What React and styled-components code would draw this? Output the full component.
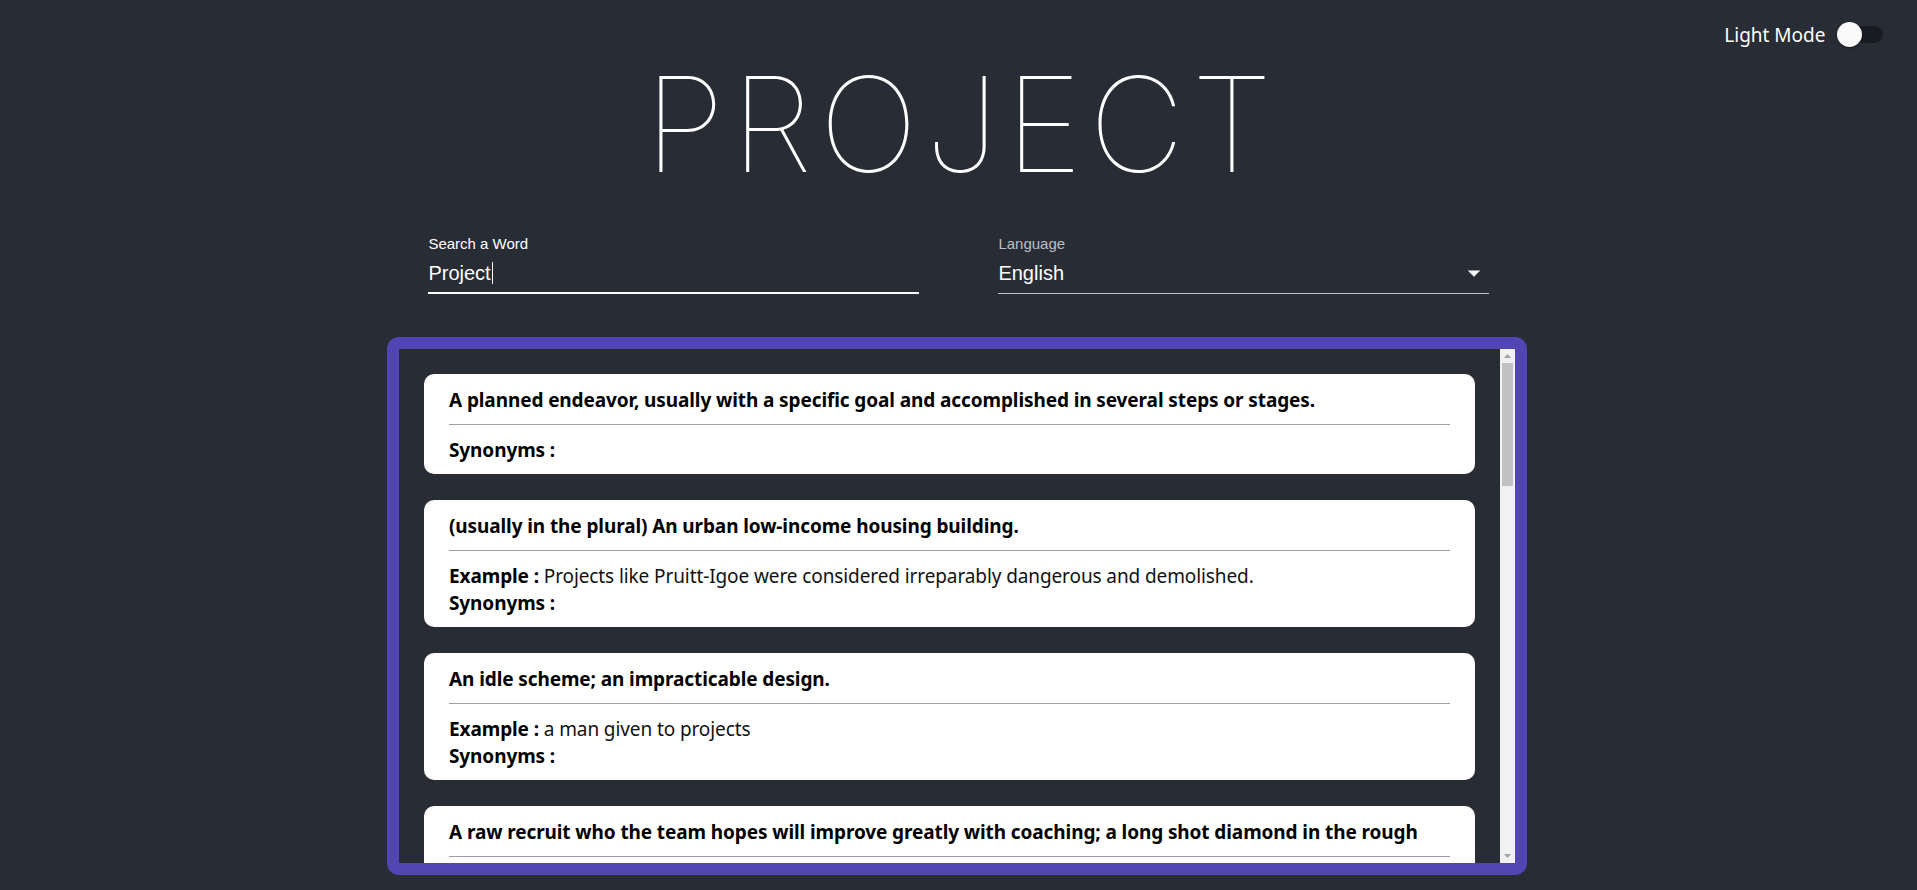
import React from "react";
import styled, { createGlobalStyle } from "styled-components";

const GlobalStyle = createGlobalStyle`
  html, body {
    margin: 0;
    padding: 0;
    background: #282c34;
  }
  body {
    font-family: "Noto Sans", "Open Sans", sans-serif;
    color: #ffffff;
    overflow: hidden;
  }
`;

const Page = styled.div`
  min-height: 890px;
  display: flex;
  flex-direction: column;
  align-items: center;
`;

const TopBar = styled.header`
  align-self: stretch;
  height: 58px;
  box-sizing: border-box;
  padding: 11px 19px 0 0;
  display: flex;
  justify-content: flex-end;
  align-items: center;
`;

const ModeLabel = styled.span`
  font-family: "Noto Sans", sans-serif;
  font-size: 19px;
  color: #ffffff;
`;

const SwitchRoot = styled.span`
  position: relative;
  display: inline-flex;
  width: 72.5px;
  height: 47.5px;
  padding: 15px;
  box-sizing: border-box;
`;

const SwitchTrack = styled.span`
  flex: 1;
  border-radius: 9px;
  background: rgba(0, 0, 0, 0.38);
`;

const SwitchThumb = styled.span`
  position: absolute;
  left: 11.25px;
  top: 11.25px;
  width: 25px;
  height: 25px;
  border-radius: 50%;
  background: #fafafa;
  box-shadow: 0 2px 1px -1px rgba(0, 0, 0, 0.2), 0 1px 1px 0 rgba(0, 0, 0, 0.14),
    0 1px 3px 0 rgba(0, 0, 0, 0.12);
`;

const Title = styled.h1`
  margin: 0;
  font-family: "Inter", sans-serif;
  font-weight: 100;
  font-size: 132px;
  line-height: 132px;
  letter-spacing: 6.8px;
  padding-left: 6.8px;
  color: #ffffff;
`;

const Fields = styled.div`
  width: 1140px;
  margin-top: 46px;
  display: flex;
  justify-content: space-around;
`;

const Field = styled.div`
  width: 43%;
  display: flex;
  flex-direction: column;
  gap: 10px;
`;

const FieldLabel = styled.label`
  font-family: "Liberation Sans", Arial, sans-serif;
  font-size: 15px;
  line-height: 15px;
  color: ${(p) => (p.$focused ? "#ffffff" : "rgba(255,255,255,0.7)")};
`;

const InputRow = styled.div`
  display: flex;
  align-items: center;
  height: 24px;
  padding-bottom: ${(p) => (p.$focused ? "7px" : "8px")};
  border-bottom: ${(p) => (p.$focused ? "2px solid #ffffff" : "1px solid rgba(255,255,255,0.7)")};
`;

const Value = styled.span`
  flex: 1;
  display: flex;
  align-items: center;
  font-family: "Liberation Sans", Arial, sans-serif;
  font-size: 20px;
  line-height: 24px;
  color: #ffffff;
`;

const Caret = styled.span`
  display: inline-block;
  width: 1px;
  height: 22px;
  background: #ffffff;
  margin-left: 1px;
`;

const DropIcon = styled.svg`
  width: 30px;
  height: 30px;
  flex: none;
  fill: #ffffff;
`;

const Box = styled.section`
  width: 1140px;
  height: 538px;
  margin-top: 43px;
  margin-left: -3px;
  box-sizing: border-box;
  border: 12px solid #5145b4;
  border-radius: 12px;
  overflow: hidden;
  display: flex;
`;

const List = styled.div`
  flex: 1;
  min-width: 0;
  overflow-y: auto;
  scrollbar-width: none;
  padding: 25px;
  display: flex;
  flex-direction: column;
  gap: 26px;
  &::-webkit-scrollbar {
    display: none;
  }
`;

const ScrollBar = styled.div`
  width: 15px;
  flex: none;
  background: #f1f1f1;
  display: flex;
  flex-direction: column;
`;

const ScrollButton = styled.div`
  height: 14px;
  flex: none;
  display: flex;
  align-items: center;
  justify-content: center;
`;

const ScrollThumb = styled.div`
  height: 123px;
  flex: none;
  margin: 0 2px;
  background: #c1c1c1;
`;

const ScrollRest = styled.div`
  flex: 1;
`;

const Arrow = styled.svg`
  width: 7px;
  height: 4px;
  fill: #a3a3a3;
`;

const Card = styled.article`
  flex: none;
  background: #ffffff;
  border-radius: 10px;
  padding: 13px 25px 10px;
  color: #000000;
  font-family: "Noto Sans", sans-serif;
  font-size: 19px;
  letter-spacing: -0.1px;
  line-height: 27px;
`;

const Definition = styled.div`
  font-weight: 700;
`;

const Divider = styled.hr`
  margin: 10px 0 12px;
  border: 0;
  border-top: 1px solid #a0a0a0;
  height: 0;
`;

const Line = styled.div`
  color: #111111;
`;

const Key = styled.b`
  font-weight: 700;
  color: #000000;
`;

const definitions = [
  { d: "A planned endeavor, usually with a specific goal and accomplished in several steps or stages." },
  {
    d: "(usually in the plural) An urban low-income housing building.",
    e: "Projects like Pruitt-Igoe were considered irreparably dangerous and demolished.",
  },
  { d: "An idle scheme; an impracticable design.", e: "a man given to projects" },
  {
    d: "A raw recruit who the team hopes will improve greatly with coaching; a long shot diamond in the rough",
  },
  { d: "A projection." },
  { d: "To extend beyond a surface.", e: "The balcony projected out from the wall." },
  { d: "To cast (an image or shadow) upon a surface.", e: "The cinema projected the movie onto a screen." },
  { d: "To make plans for; to forecast.", e: "Analysts are projecting a 5% drop in sales next year." },
  { d: "To present (oneself), to convey a certain image.", e: "She projected confidence throughout the interview." },
  { d: "To throw or cast forward; to shoot forth.", e: "The catapult projected the stone over the wall." },
  { d: "To extrapolate; to infer from known data.", e: "We project the population to double by 2050." },
  { d: "To cause to be seen at a distance.", e: "The lighthouse projects its beam far out to sea." },
  { d: "To attribute one's own feelings or thoughts to another.", e: "He projects his fears onto his children." },
];

function DefinitionCard({ item }) {
  return (
    <Card>
      <Definition>{item.d}</Definition>
      <Divider />
      {item.e && (
        <Line>
          <Key>Example :</Key> {item.e}
        </Line>
      )}
      <Line>
        <Key>Synonyms :</Key>
      </Line>
    </Card>
  );
}

export default function App() {
  return (
    <>
      <GlobalStyle />
      <Page>
        <TopBar>
          <ModeLabel>Light Mode</ModeLabel>
          <SwitchRoot>
            <SwitchTrack />
            <SwitchThumb />
          </SwitchRoot>
        </TopBar>
        <Title>PROJECT</Title>
        <Fields>
          <Field>
            <FieldLabel $focused>Search a Word</FieldLabel>
            <InputRow $focused>
              <Value>
                Project
                <Caret />
              </Value>
            </InputRow>
          </Field>
          <Field>
            <FieldLabel>Language</FieldLabel>
            <InputRow>
              <Value>English</Value>
              <DropIcon viewBox="0 0 24 24">
                <path d="M7 10l5 5 5-5z" />
              </DropIcon>
            </InputRow>
          </Field>
        </Fields>
        <Box>
          <List>
            {definitions.map((item, i) => (
              <DefinitionCard key={i} item={item} />
            ))}
          </List>
          <ScrollBar>
            <ScrollButton>
              <Arrow viewBox="0 0 7 4">
                <path d="M3.5 0L7 4H0z" />
              </Arrow>
            </ScrollButton>
            <ScrollThumb />
            <ScrollRest />
            <ScrollButton>
              <Arrow viewBox="0 0 7 4">
                <path d="M0 0h7L3.5 4z" />
              </Arrow>
            </ScrollButton>
          </ScrollBar>
        </Box>
      </Page>
    </>
  );
}
